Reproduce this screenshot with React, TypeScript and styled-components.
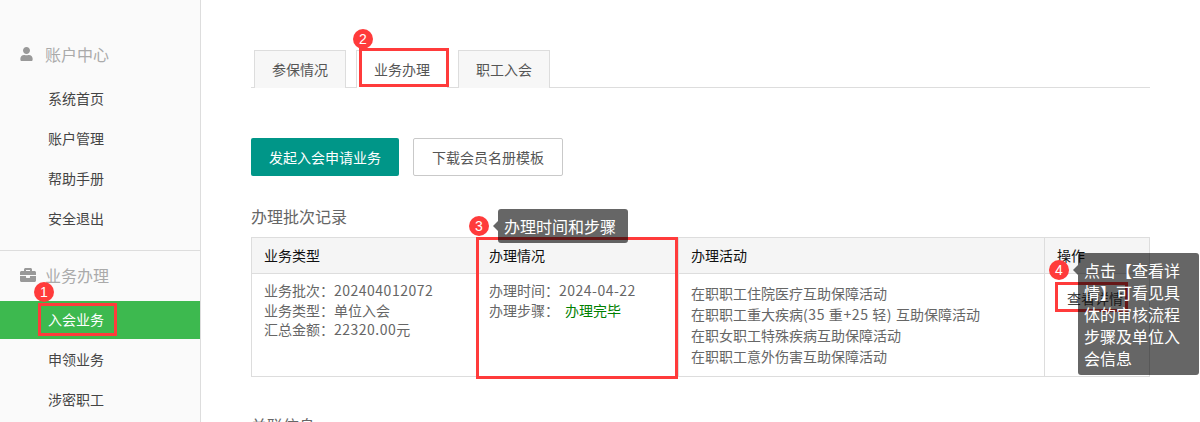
import styled, { createGlobalStyle } from "styled-components";
import { FaUser, FaBriefcase } from "react-icons/fa";

const GlobalStyle = createGlobalStyle`
  html, body {
    margin: 0;
    height: 422px;
    overflow: hidden;
    background: #fff;
    font-family: "Noto Sans CJK SC", "Noto Sans", sans-serif;
    font-size: 14px;
    color: #666;
  }
`;

const Page = styled.div`
  position: relative;
  display: flex;
  width: 1200px;
  height: 422px;
  overflow: hidden;
`;

const Sidebar = styled.aside`
  width: 200px;
  height: 422px;
  flex: none;
  background: #fafafa;
  border-right: 1px solid #ddd;
  padding-top: 35px;
`;

const Section = styled.div`
  & + & {
    margin-top: 12px;
    padding-top: 5px;
    border-top: 1px solid #ddd;
  }
`;

const SectionTitle = styled.div`
  display: flex;
  align-items: center;
  height: 38px;
  padding-left: 20px;
  margin-bottom: 7px;
  font-size: 16px;
  color: #aaa;

  svg {
    width: 13px;
    height: 14px;
    color: #999;
    margin-right: 12px;
  }
`;

const BriefTitle = styled(SectionTitle)`
  svg {
    width: 16px;
    height: 16px;
    margin-right: 9px;
  }
`;

const NavItem = styled.div<{ $active?: boolean }>`
  height: 38px;
  line-height: 36px;
  margin-bottom: 2px;
  padding-left: 48px;
  color: ${(p) => (p.$active ? "#fff" : "#444")};
  background: ${(p) => (p.$active ? "#3db94f" : "transparent")};
`;

const Main = styled.main`
  flex: 1;
  padding: 50px 50px 0 50px;
  min-width: 0;
`;

const Tabs = styled.div`
  display: flex;
  height: 38px;
  padding-left: 3px;
  gap: 10px;
  border-bottom: 1px solid #ddd;
  box-sizing: border-box;
`;

const Tab = styled.div<{ $active?: boolean }>`
  width: 92px;
  height: 38px;
  line-height: 37px;
  box-sizing: border-box;
  text-align: center;
  color: #555;
  background: ${(p) => (p.$active ? "#fff" : "#f7f7f7")};
  border: 1px solid #ddd;
  border-bottom: none;
`;

const Actions = styled.div`
  display: flex;
  gap: 14px;
  margin-top: 50px;
`;

const PrimaryButton = styled.button`
  width: 148px;
  height: 38px;
  border: none;
  border-radius: 2px;
  background: #009688;
  color: #fff;
  font: inherit;
`;

const OutlineButton = styled.button`
  width: 150px;
  height: 38px;
  border: 1px solid #c9c9c9;
  border-radius: 2px;
  background: #fff;
  color: #555;
  font: inherit;
`;

const SectionHeading = styled.h3`
  margin: 29px 0 9px;
  font-size: 16px;
  line-height: 23px;
  font-weight: 400;
  color: #666;
`;

const Table = styled.table`
  width: 898px;
  border-collapse: collapse;
  table-layout: fixed;
`;

const Col = styled.col<{ $w: number }>`
  width: ${(p) => p.$w}px;
`;

const Th = styled.th`
  height: 36px;
  padding: 0 12px 2px;
  box-sizing: border-box;
  background: #f5f5f5;
  border: 1px solid #ddd;
  font-weight: 400;
  text-align: left;
  color: #111;
`;

const Td = styled.td`
  height: 103px;
  padding: 7px 12px 0;
  box-sizing: border-box;
  border: 1px solid #ddd;
  vertical-align: top;
  line-height: 19.5px;
`;

const ActivityTd = styled(Td)`
  padding-top: 9px;
  line-height: 21px;
`;

const Num = styled.span`
  letter-spacing: 0.5px;
`;

const WideNum = styled.span`
  letter-spacing: 0.6px;
`;

const Done = styled.span`
  margin-left: 6px;
  color: #008000;
`;

const DetailLink = styled.span`
  display: block;
  margin-top: 8px;
  margin-left: 10px;
  color: #444;
`;

const NextHeading = styled.h3`
  margin: 37px 0 0;
  font-size: 16px;
  line-height: 23px;
  font-weight: 400;
  color: #666;
`;

const Highlight = styled.div<{ $x: number; $y: number; $w: number; $h: number }>`
  position: absolute;
  left: ${(p) => p.$x}px;
  top: ${(p) => p.$y}px;
  width: ${(p) => p.$w}px;
  height: ${(p) => p.$h}px;
  box-sizing: border-box;
  border: 3px solid #ff3b3b;
`;

const Badge = styled.div<{ $x: number; $y: number }>`
  position: absolute;
  left: ${(p) => p.$x}px;
  top: ${(p) => p.$y}px;
  width: 20px;
  height: 20px;
  border-radius: 50%;
  background: #ff3b3b;
  color: #fff;
  font: 400 14px/20px "Liberation Sans", sans-serif;
  text-align: center;
`;

const Tip = styled.div<{ $x: number; $y: number; $w: number; $h: number }>`
  position: absolute;
  left: ${(p) => p.$x}px;
  top: ${(p) => p.$y}px;
  width: ${(p) => p.$w}px;
  height: ${(p) => p.$h}px;
  box-sizing: border-box;
  padding: 6px;
  border-radius: 3px;
  background: rgba(0, 0, 0, 0.6);
  color: #fff;
  font-size: 16px;
  line-height: 22px;

  &::before {
    content: "";
    position: absolute;
    left: -5px;
    top: 12px;
    border-style: solid;
    border-width: 5px 5px 5px 0;
    border-color: transparent rgba(0, 0, 0, 0.6) transparent transparent;
  }
`;

const App = () => {
  return (
    <Page>
      <GlobalStyle />
      <Sidebar>
        <Section>
          <SectionTitle>
            <FaUser />
            账户中心
          </SectionTitle>
          <NavItem>系统首页</NavItem>
          <NavItem>账户管理</NavItem>
          <NavItem>帮助手册</NavItem>
          <NavItem>安全退出</NavItem>
        </Section>
        <Section>
          <BriefTitle>
            <FaBriefcase />
            业务办理
          </BriefTitle>
          <NavItem $active>入会业务</NavItem>
          <NavItem>申领业务</NavItem>
          <NavItem>涉密职工</NavItem>
        </Section>
      </Sidebar>
      <Main>
        <Tabs>
          <Tab>参保情况</Tab>
          <Tab $active>业务办理</Tab>
          <Tab>职工入会</Tab>
        </Tabs>
        <Actions>
          <PrimaryButton>发起入会申请业务</PrimaryButton>
          <OutlineButton>下载会员名册模板</OutlineButton>
        </Actions>
        <SectionHeading>办理批次记录</SectionHeading>
        <Table>
          <colgroup>
            <Col $w={225} />
            <Col $w={202} />
            <Col $w={366} />
            <Col $w={105} />
          </colgroup>
          <thead>
            <tr>
              <Th>业务类型</Th>
              <Th>办理情况</Th>
              <Th>办理活动</Th>
              <Th>操作</Th>
            </tr>
          </thead>
          <tbody>
            <tr>
              <Td>
                业务批次：<Num>202404012072</Num>
                <br />
                业务类型：单位入会
                <br />
                汇总金额：<Num>22320.00</Num>元
              </Td>
              <Td>
                办理时间：<Num>2024-04-22</Num>
                <br />
                办理步骤：
                <Done>办理完毕</Done>
              </Td>
              <ActivityTd>
                在职职工住院医疗互助保障活动
                <br />
                在职职工重大疾病<WideNum>(35 重+25 轻) </WideNum>互助保障活动
                <br />
                在职女职工特殊疾病互助保障活动
                <br />
                在职职工意外伤害互助保障活动
              </ActivityTd>
              <Td>
                <DetailLink>查看详情</DetailLink>
              </Td>
            </tr>
          </tbody>
        </Table>
        <NextHeading>关联信息</NextHeading>
      </Main>

      <Highlight $x={38} $y={303} $w={79} $h={33} />
      <Badge $x={34} $y={282}>1</Badge>
      <Highlight $x={359} $y={48} $w={90} $h={39} />
      <Badge $x={353} $y={29}>2</Badge>
      <Highlight $x={476} $y={237} $w={202} $h={142} />
      <Badge $x={469} $y={216}>3</Badge>
      <Tip $x={498} $y={209} $w={130} $h={34}>办理时间和步骤</Tip>
      <Highlight $x={1055} $y={282} $w={73} $h={30} />
      <Badge $x={1049} $y={260}>4</Badge>
      <Tip $x={1078} $y={253} $w={121} $h={122}>点击【查看详情】可看见具体的审核流程步骤及单位入会信息</Tip>
    </Page>
  );
};

export default App;
